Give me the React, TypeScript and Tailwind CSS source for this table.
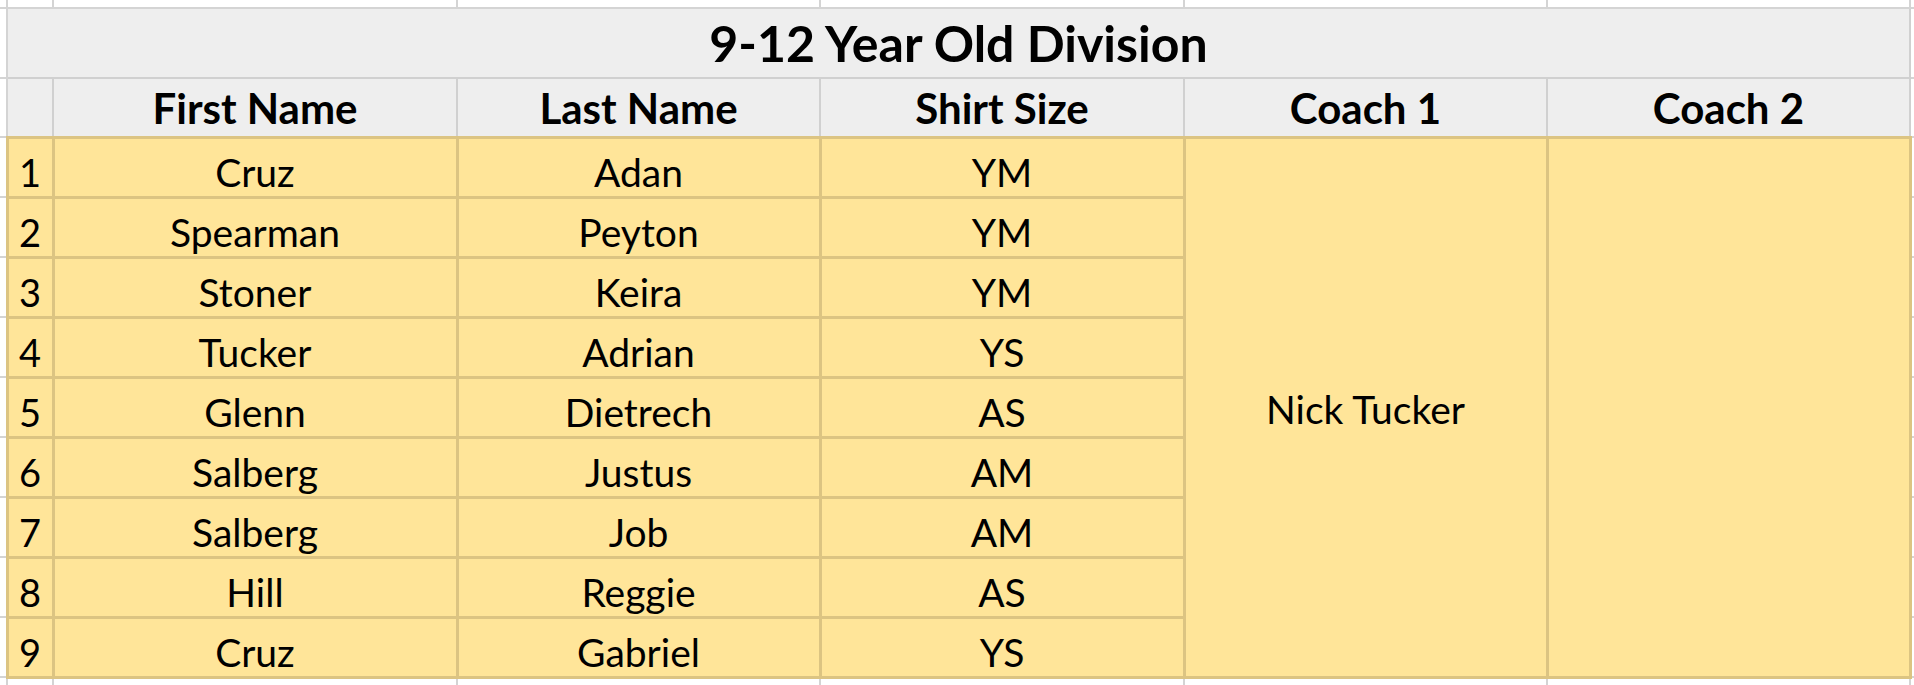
import React from 'react';

type Player = { first: string; last: string; size: string };

const players: Player[] = [
  { first: 'Cruz', last: 'Adan', size: 'YM' },
  { first: 'Spearman', last: 'Peyton', size: 'YM' },
  { first: 'Stoner', last: 'Keira', size: 'YM' },
  { first: 'Tucker', last: 'Adrian', size: 'YS' },
  { first: 'Glenn', last: 'Dietrech', size: 'AS' },
  { first: 'Salberg', last: 'Justus', size: 'AM' },
  { first: 'Salberg', last: 'Job', size: 'AM' },
  { first: 'Hill', last: 'Reggie', size: 'AS' },
  { first: 'Cruz', last: 'Gabriel', size: 'YS' },
];

const headers = ['First Name', 'Last Name', 'Shirt Size', 'Coach 1', 'Coach 2'];

// plain sheet cell (white, light gridlines)
const blank = 'p-0 border-2 border-[#d4d4d4] bg-white';
const gray = 'p-0 border-2 border-[#d0d0d0] bg-[#eeeeee]';
const gold = 'p-0 border-[3px] border-[#dcc482] bg-[#ffe599] align-bottom text-center';

const App = () => {
  return (
    <div className="w-[1914px] h-[685px] overflow-hidden bg-white">
      <table className="table-fixed border-collapse w-[1914px] text-black font-['Lato',sans-serif]">
        <colgroup>
          <col className="w-[7px]" />
          <col className="w-[46px]" />
          <col className="w-[404px]" />
          <col className="w-[363px]" />
          <col className="w-[364px]" />
          <col className="w-[363px]" />
          <col className="w-[363px]" />
          <col />
        </colgroup>
        <tbody>
          {/* tail of the row above */}
          <tr className="h-[8px]">
            {Array.from({ length: 8 }).map((_, i) => (
              <td key={i} className={`${blank} border-t-0 ${i === 0 ? 'border-l-0' : ''} ${i === 7 ? 'border-r-0' : ''}`} />
            ))}
          </tr>

          {/* Title */}
          <tr className="h-[70px]">
            <td className={`${blank} border-l-0`} />
            <td colSpan={6} className={`${gray} align-bottom text-center pb-[9px]`}>
              <span className="text-[50px] font-bold leading-none">9-12 Year Old Division</span>
            </td>
            <td className={`${blank} border-r-0`} />
          </tr>

          {/* Column headers */}
          <tr className="h-[59px]">
            <td className={`${blank} border-l-0`} />
            <td className={gray} />
            {headers.map((h) => (
              <td key={h} className={`${gray} align-bottom text-center pb-[6px]`}>
                <span className="text-[42px] font-bold leading-none">{h}</span>
              </td>
            ))}
            <td className={`${blank} border-r-0`} />
          </tr>

          {/* Players */}
          {players.map((p, i) => (
            <tr key={i} className="h-[60px]">
              <td className={`${blank} border-l-0`} />
              <td className={`${gold} pb-[3px]`}>
                <span className="text-[38px] leading-none">{i + 1}</span>
              </td>
              <td className={`${gold} pb-[3px]`}>
                <span className="text-[39px] leading-none">{p.first}</span>
              </td>
              <td className={`${gold} pb-[3px]`}>
                <span className="text-[39px] leading-none">{p.last}</span>
              </td>
              <td className={`${gold} pb-[3px]`}>
                <span className="text-[39px] leading-none">{p.size}</span>
              </td>
              {i === 0 && (
                <>
                  <td rowSpan={9} className={`${gold} align-middle pt-[5px]`}>
                    <span className="text-[39px] leading-none">Nick Tucker</span>
                  </td>
                  <td rowSpan={9} className={gold} />
                </>
              )}
              <td className={`${blank} border-r-0`} />
            </tr>
          ))}

          {/* head of the row below */}
          <tr className="h-[8px]">
            {Array.from({ length: 8 }).map((_, i) => (
              <td key={i} className={`${blank} border-b-0 ${i === 0 ? 'border-l-0' : ''} ${i === 7 ? 'border-r-0' : ''}`} />
            ))}
          </tr>
        </tbody>
      </table>
    </div>
  );
};

export default App;
